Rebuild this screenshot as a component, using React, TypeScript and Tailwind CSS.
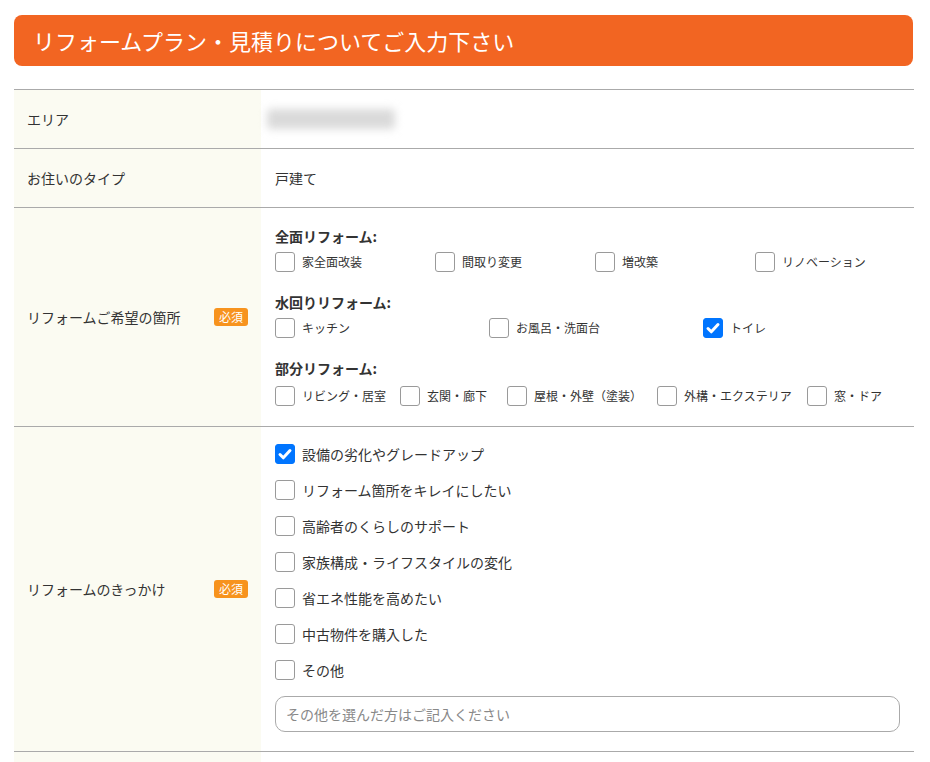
import { useState } from "react";

const font = { fontFamily: '"Noto Sans CJK JP", "Noto Sans", sans-serif' };

const fullItems = ["家全面改装", "間取り変更", "増改築", "リノベーション"];
const waterItems = ["キッチン", "お風呂・洗面台", "トイレ"];
const partItems = [
  { label: "リビング・居室", w: "w-[125px]" },
  { label: "玄関・廊下", w: "w-[107px]" },
  { label: "屋根・外壁（塗装）", w: "w-[150px]" },
  { label: "外構・エクステリア", w: "w-[150px]" },
  { label: "窓・ドア", w: "" },
];
const reasons = [
  "設備の劣化やグレードアップ",
  "リフォーム箇所をキレイにしたい",
  "高齢者のくらしのサポート",
  "家族構成・ライフスタイルの変化",
  "省エネ性能を高めたい",
  "中古物件を購入した",
  "その他",
];

const Check = ({
  label,
  checked,
  onChange,
  small,
}: {
  label: string;
  checked: boolean;
  onChange: () => void;
  small?: boolean;
}) => (
  <label className="flex items-center gap-[7px] cursor-pointer">
    <span className="relative h-5 w-5 shrink-0">
      <input
        type="checkbox"
        checked={checked}
        onChange={onChange}
        className="peer m-0 block h-5 w-5 appearance-none rounded-[3px] border border-[#9a9a9a] bg-white checked:border-[#0075ff] checked:bg-[#0075ff]"
      />
      <svg
        viewBox="0 0 20 20"
        className="pointer-events-none absolute inset-0 hidden h-5 w-5 peer-checked:block"
        fill="none"
        stroke="white"
        strokeWidth="3"
        strokeLinecap="round"
        strokeLinejoin="round"
      >
        <path d="M5 10.5l3.3 3.3L15 6.5" />
      </svg>
    </span>
    <span className={`${small ? "text-[12px]" : "text-[14px]"} leading-5 text-[#333]`}>{label}</span>
  </label>
);

const Required = () => (
  <span className="rounded-[3px] bg-[#f7931e] px-[5px] text-[12px] leading-[18px] text-white">必須</span>
);

const Row = ({
  label,
  required,
  children,
  className = "",
}: {
  label: string;
  required?: boolean;
  children?: React.ReactNode;
  className?: string;
}) => (
  <div className="flex border-t border-[#aaaaaa]">
    <div className="flex w-[247px] shrink-0 items-center justify-between bg-[#fbfbf2] pl-[13px] pr-[13px]">
      <span className="text-[14px] text-[#333]">{label}</span>
      {required && <Required />}
    </div>
    <div className={`flex-1 pl-[14px] ${className}`}>{children}</div>
  </div>
);

export default function App() {
  const [checks, setChecks] = useState<Record<string, boolean>>({
    トイレ: true,
    設備の劣化やグレードアップ: true,
  });
  const toggle = (k: string) => setChecks((c) => ({ ...c, [k]: !c[k] }));

  return (
    <div className="bg-white px-[14px] pt-[15px] pb-0" style={font}>
      <h1 className="flex h-[51px] w-[899px] items-center rounded-lg bg-[#f26522] pl-[19px] text-[22px] font-normal text-white">
        リフォームプラン・見積りについてご入力下さい
      </h1>

      <div className="mt-[23px] w-[900px]">
        <Row label="エリア" className="flex h-[58px] items-center">
          <div className="ml-[-8px] h-[20px] w-[128px] rounded-sm bg-[#dadada] blur-[4px]" />
        </Row>
        <Row label="お住いのタイプ" className="flex h-[58px] items-center">
          <span className="text-[14px] leading-[18px] text-[#333]">戸建て</span>
        </Row>
        <Row label="リフォームご希望の箇所" required className="pt-[19px] pb-5">
          <p className="text-[14px] font-bold leading-[18px] text-[#333]">全面リフォーム:</p>
          <div className="mt-[7px] flex">
            {fullItems.map((t) => (
              <div key={t} className="w-[160px]">
                <Check small label={t} checked={!!checks[t]} onChange={() => toggle(t)} />
              </div>
            ))}
          </div>
          <p className="mt-[21px] text-[14px] font-bold leading-[18px] text-[#333]">水回りリフォーム:</p>
          <div className="mt-[7px] flex">
            {waterItems.map((t) => (
              <div key={t} className="w-[214px]">
                <Check small label={t} checked={!!checks[t]} onChange={() => toggle(t)} />
              </div>
            ))}
          </div>
          <p className="mt-[21px] text-[14px] font-bold leading-[18px] text-[#333]">部分リフォーム:</p>
          <div className="mt-[9px] flex">
            {partItems.map((p) => (
              <div key={p.label} className={`${p.w} shrink-0`}>
                <Check small label={p.label} checked={!!checks[p.label]} onChange={() => toggle(p.label)} />
              </div>
            ))}
          </div>
        </Row>
        <Row label="リフォームのきっかけ" required className="pt-[17px] pb-[19px] pr-[14px]">
          <div className="flex flex-col gap-4">
            {reasons.map((t) => (
              <Check key={t} label={t} checked={!!checks[t]} onChange={() => toggle(t)} />
            ))}
          </div>
          <input
            type="text"
            placeholder="その他を選んだ方はご記入ください"
            className="mt-4 h-9 w-full rounded-[10px] border border-[#aaaaaa] px-[10px] text-[14px] text-[#333] placeholder:text-[#888] outline-none"
          />
        </Row>
        <Row label="" className="h-16" />
      </div>
    </div>
  );
}
